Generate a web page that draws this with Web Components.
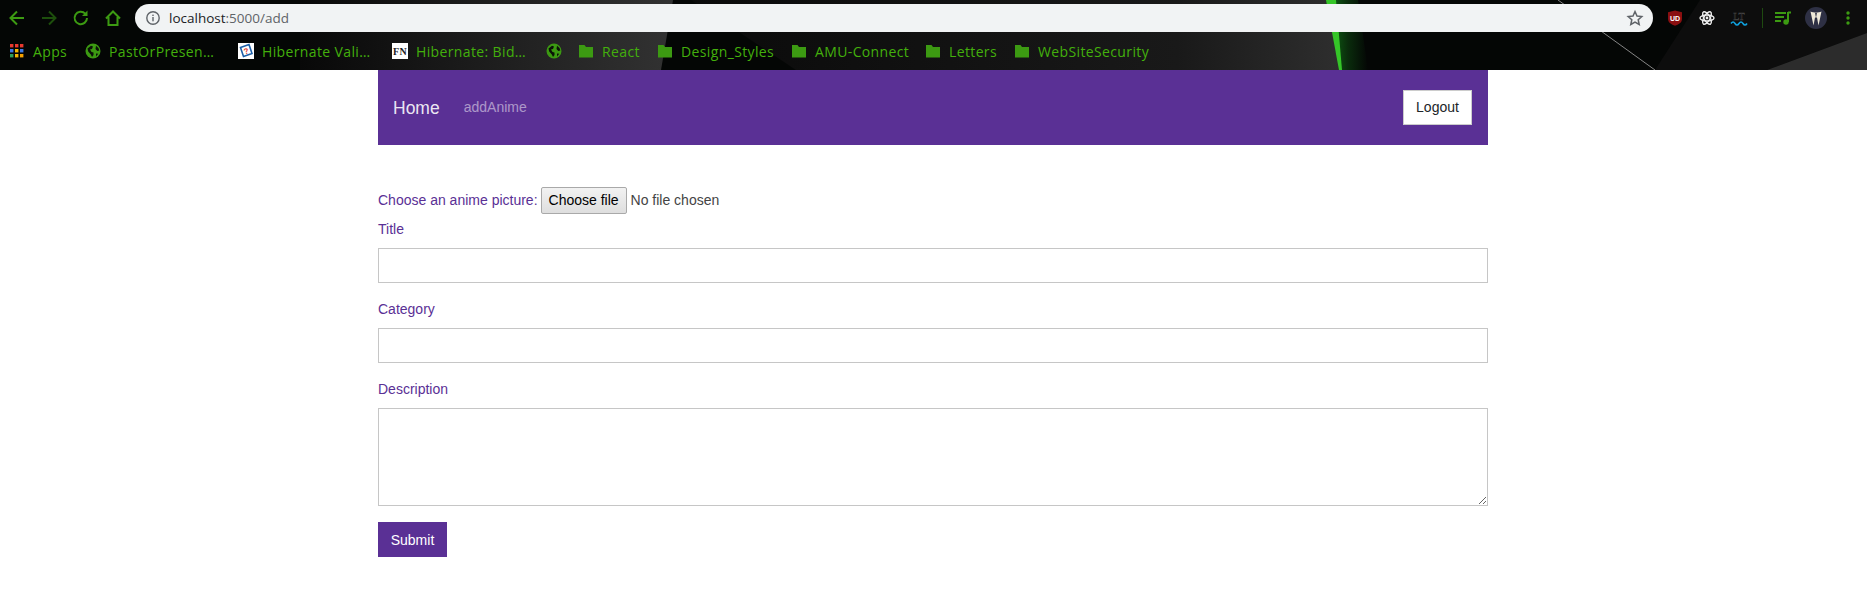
<!DOCTYPE html>
<html>
<head>
<meta charset="utf-8">
<title>localhost:5000/add</title>
<style>
  html, body { margin: 0; padding: 0; background: #fff; }
  body { font-family: "Liberation Sans", Arial, sans-serif; font-size: 14px; }
</style>
</head>
<body>
<browser-chrome url-host="localhost" url-path=":5000/add">
  <bookmark-item icon="apps" style="--w:76px">Apps</bookmark-item>
  <bookmark-item icon="globe" style="--w:153px">PastOrPresen…</bookmark-item>
  <bookmark-item icon="quiz" style="--w:154px">Hibernate Vali…</bookmark-item>
  <bookmark-item icon="fn" style="--w:154px">Hibernate: Bid…</bookmark-item>
  <bookmark-item icon="globe" style="--w:32px"></bookmark-item>
  <bookmark-item icon="folder" style="--w:79px">React</bookmark-item>
  <bookmark-item icon="folder" style="--w:134px">Design_Styles</bookmark-item>
  <bookmark-item icon="folder" style="--w:134px">AMU-Connect</bookmark-item>
  <bookmark-item icon="folder" style="--w:89px">Letters</bookmark-item>
  <bookmark-item icon="folder">WebSiteSecurity</bookmark-item>
</browser-chrome>
<app-page>
  <app-navbar slot="nav" brand="Home">
    <nav-link>addAnime</nav-link>
    <logout-button slot="end">Logout</logout-button>
  </app-navbar>
  <file-field label="Choose an anime picture:"></file-field>
  <form-field label="Title"></form-field>
  <form-field label="Category"></form-field>
  <form-field label="Description" multiline></form-field>
  <submit-button>Submit</submit-button>
</app-page>

<script>
const GREEN = '#3c9a12';

class BookmarkItem extends HTMLElement {
    static get icons() {
        return {
            apps: `<svg width="16" height="16" viewBox="0 0 16 16">
                <rect x="1" y="1" width="3.4" height="3.4" fill="#e8392f"/><rect x="6" y="1" width="3.4" height="3.4" fill="#e8392f"/><rect x="11" y="1" width="3.4" height="3.4" fill="#e8392f"/>
                <rect x="1" y="6" width="3.4" height="3.4" fill="#3b78e7"/><rect x="6" y="6" width="3.4" height="3.4" fill="#f4b400"/><rect x="11" y="6" width="3.4" height="3.4" fill="#3b78e7"/>
                <rect x="1" y="11" width="3.4" height="3.4" fill="#2f9e5b"/><rect x="6" y="11" width="3.4" height="3.4" fill="#f4b400"/><rect x="11" y="11" width="3.4" height="3.4" fill="#f4a000"/></svg>`,
            globe: `<svg width="16" height="16" viewBox="0 0 16 16"><circle cx="8" cy="8" r="7.5" fill="${GREEN}"/>
                <path d="M2.5 5.5L6 2.8 8 3.5 7 6 5 6.5 6.5 9 8.5 9.5V12L7 14 5.8 11.5 3.2 8.5zM11 2.8l2.5 2.2.8 2.5-2 .5L10.5 6zM11 10.5l2.3.3-2.3 2.7z" fill="#0b1208"/></svg>`,
            folder: `<svg width="16" height="16" viewBox="0 0 16 16"><path d="M1 2h5.5l1.5 2h7v10.5H1z" fill="${GREEN}"/></svg>`,
            quiz: `<svg width="16" height="16" viewBox="0 0 16 16"><rect width="16" height="16" fill="#fff"/>
                <path d="M2.5 4.5L11 1.500l3 9-8.500 3z" fill="#fff" stroke="#1c5fa8" stroke-width="1.6"/>
                <text x="8.3" y="11" font-family="Liberation Sans, sans-serif" font-size="8" font-weight="700" fill="#d8322a" text-anchor="middle" transform="rotate(-18 8 8)">?</text></svg>`,
            fn: `<svg width="16" height="16" viewBox="0 0 16 16"><rect width="16" height="16" fill="#fff"/>
                <text x="8" y="11.5" font-family="Liberation Serif, serif" font-size="10" font-weight="700" fill="#222" text-anchor="middle">FN</text></svg>`
        };
    }

    constructor() {
        super();
        this.attachShadow({ mode: 'open' });
    }

    connectedCallback() {
        const icon = BookmarkItem.icons[this.getAttribute('icon')] || '';
        this.shadowRoot.innerHTML = `
            <style>
                :host { display: inline-flex; flex: none; align-items: center; gap: 8px; width: var(--w, auto); height: 24px; color: #43b00c; font-size: 14px; white-space: nowrap; letter-spacing: 0.37px; }
                svg { display: block; flex: none; }
            </style>
            ${icon}<slot></slot>
        `;
    }
}

class BrowserChrome extends HTMLElement {
    constructor() {
        super();
        this.attachShadow({ mode: 'open' });
    }

    connectedCallback() {
        const host = this.getAttribute('url-host');
        const path = this.getAttribute('url-path');
        this.shadowRoot.innerHTML = `
            <style>
                :host { display: block; position: relative; height: 70px; background: #040605; overflow: hidden; font-family: "Open Sans", "Noto Sans", sans-serif; }
                .wallpaper { position: absolute; inset: 0; }
                .toolbar { position: relative; display: flex; align-items: center; height: 32px; box-sizing: border-box; padding: 4px 0 0 7px; }
                .nav { display: flex; align-items: center; gap: 12px; width: 128px; flex: none; }
                svg { display: block; flex: none; }
                .omnibox { width: 1518px; height: 28px; flex: none; background: #f1f3f4; border-radius: 14px; display: flex; align-items: center; padding: 0 9px 0 10px; box-sizing: border-box; font-size: 13.5px; color: #5f6368; }
                .omnibox b { font-weight: 400; color: #202124; }
                .omnibox .url { margin-left: 8px; flex: 1; }
                .actions { display: flex; align-items: center; margin-left: 6px; flex: none; }
                .slot { width: 32px; height: 28px; display: flex; align-items: center; justify-content: center; flex: none; }
                .sep { width: 1px; height: 20px; background: #1e4a10; margin: 0 4px 0 7px; flex: none; }
                .bookmarks { position: relative; display: flex; align-items: center; height: 24px; margin-top: 7px; padding-left: 9px; }
            </style>
            <svg class="wallpaper" width="1867" height="70" viewBox="0 0 1867 70">
                <defs>
                    <linearGradient id="fade" x1="0" x2="1" y1="0" y2="0"><stop offset="0" stop-color="#080808"/><stop offset="1" stop-color="#323232"/></linearGradient>
                    <linearGradient id="fade2" x1="0" x2="1" y1="0" y2="0"><stop offset="0" stop-color="#0a0a0a"/><stop offset=".75" stop-color="#191919"/><stop offset="1" stop-color="#2e2e2e"/></linearGradient>
                    <linearGradient id="glow" x1="0" x2="1" y1="0" y2="0"><stop offset="0" stop-color="#0f6a14"/><stop offset=".5" stop-color="#0a2c0c"/><stop offset="1" stop-color="#040605"/></linearGradient>
                </defs>
                <polygon points="300,0 673,0 661,70 300,70" fill="url(#fade)"/>
                <polygon points="691,0 1328,0 1340,70 796,70" fill="url(#fade2)"/>
                <polygon points="1328,0 1358,0 1368,70 1340,70" fill="url(#glow)"/>
                <polygon points="1326,0 1336,0 1342,70 1339,70" fill="#35c528"/>
                <polygon points="1700,0 1867,0 1867,33 1767,70 1655,70" fill="#0d0d0d"/>
                <polygon points="1767,70 1867,33 1867,70" fill="#2c2c2c"/>
                <line x1="1558" y1="0" x2="1655" y2="70" stroke="#858585" stroke-width="1"/>
            </svg>
            <div class="toolbar">
                <div class="nav">
                    <svg width="20" height="20" viewBox="0 0 20 20" fill="none" stroke="#3c9a12" stroke-width="2"><path d="M17 10H4M10 3.5L3.5 10l6.5 6.5"/></svg>
                    <svg width="20" height="20" viewBox="0 0 20 20" fill="none" stroke="#1d4f0c" stroke-width="2"><path d="M3 10h13M10 3.5l6.5 6.5-6.5 6.5"/></svg>
                    <svg width="20" height="20" viewBox="0 0 20 20" fill="none" stroke="#3c9a12" stroke-width="2"><path d="M16 10a6.2 6.2 0 1 1-1.8-4.4"/><path d="M16.5 2.5V8H11z" fill="#3c9a12" stroke="none"/></svg>
                    <svg width="20" height="20" viewBox="0 0 20 20" fill="none" stroke="#3c9a12" stroke-width="2"><path d="M3 10.5L10 3.5l7 7M5.5 9v8h9V9"/></svg>
                </div>
                <div class="omnibox">
                    <svg width="16" height="16" viewBox="0 0 16 16"><circle cx="8" cy="8" r="6.2" fill="none" stroke="#5f6368" stroke-width="1.4"/><rect x="7.3" y="7" width="1.4" height="4.3" fill="#5f6368"/><rect x="7.3" y="4.6" width="1.4" height="1.4" fill="#5f6368"/></svg>
                    <span class="url"><b>${host}</b>${path}</span>
                    <svg width="18" height="18" viewBox="0 0 18 18"><path d="M9 2.5l2 4.5 4.8.5-3.6 3.200 1 4.800L9 13l-4.200 2.500 1-4.800L2.200 7.500 7 7z" fill="none" stroke="#5f6368" stroke-width="1.5"/></svg>
                </div>
                <div class="actions">
                    <span class="slot"><svg width="16" height="16" viewBox="0 0 16 16"><path d="M8 .5l7 1.8v6.700c0 3.500-3.500 5.700-7 6.800-3.500-1.100-7-3.300-7-6.800V2.300z" fill="#8a0f10"/><text x="8" y="10.5" font-family="Liberation Sans, sans-serif" font-size="7" font-weight="700" fill="#fff" text-anchor="middle">UD</text></svg></span>
                    <span class="slot"><svg width="16" height="16" viewBox="0 0 16 16" fill="none" stroke="#eee" stroke-width="1.4"><ellipse cx="8" cy="8" rx="7" ry="3"/><ellipse cx="8" cy="8" rx="7" ry="3" transform="rotate(60 8 8)"/><ellipse cx="8" cy="8" rx="7" ry="3" transform="rotate(120 8 8)"/><circle cx="8" cy="8" r="1.4" fill="#eee" stroke="none"/></svg></span>
                    <span class="slot"><svg width="18" height="18" viewBox="0 0 18 18"><text x="9" y="10.5" font-family="Liberation Serif, serif" font-size="10" fill="#0b0b0b" stroke="#4a4a4a" stroke-width=".4" text-anchor="middle">LT</text><path d="M1 14.5c1.500-2 2.700-2 4 0s2.700 2 4 0 2.700-2 4 0 2.700 2 4 0" fill="none" stroke="#10a0dc" stroke-width="1.6"/></svg></span>
                    <span class="sep"></span>
                    <span class="slot"><svg width="16" height="14" viewBox="0 0 16 14"><path d="M0 2h11M0 6h9M0 10h6" stroke="#3c9a12" stroke-width="2"/><path d="M13 1v10M13 1.5h3" stroke="#3c9a12" stroke-width="2" fill="none"/><circle cx="11" cy="11" r="2.7" fill="#3c9a12"/></svg></span>
                    <span class="slot" style="margin-left:1px"><svg width="22" height="22" viewBox="0 0 22 22"><circle cx="11" cy="11" r="11" fill="#2e3044"/><path d="M5.5 4.5c3 1.300 8 1.300 11 0l-1.500 7-1.500 7-1.500-8h-2l-1.500 8-1.500-7z" fill="#efe9d8"/><path d="M10 5.8h2l-1 5z" fill="#2e3044"/></svg></span>
                    <span class="slot"><svg width="6" height="16" viewBox="0 0 6 16"><circle cx="3" cy="3" r="1.7" fill="#3c9a12"/><circle cx="3" cy="8" r="1.7" fill="#3c9a12"/><circle cx="3" cy="13" r="1.7" fill="#3c9a12"/></svg></span>
                </div>
            </div>
            <div class="bookmarks"><slot></slot></div>
        `;
    }
}

class AppPage extends HTMLElement {
    constructor() {
        super();
        this.attachShadow({ mode: 'open' }).innerHTML = `
            <style>
                :host { display: block; width: 1110px; margin: 0 0 0 378px; }
                .form { display: flex; flex-direction: column; align-items: stretch; padding-top: 42px; }
            </style>
            <slot name="nav"></slot>
            <div class="form"><slot></slot></div>
        `;
    }
}

class AppNavbar extends HTMLElement {
    constructor() {
        super();
        this.attachShadow({ mode: 'open' });
    }

    connectedCallback() {
        this.shadowRoot.innerHTML = `
            <style>
                :host { display: flex; align-items: center; height: 75px; background: #5a3095; padding: 0 16px 0 15px; box-sizing: border-box; }
                .brand { color: rgba(255,255,255,.9); font-size: 17.5px; margin: 2px 24px 0 0; }
                .end { margin-left: auto; }
            </style>
            <span class="brand">${this.getAttribute('brand')}</span>
            <slot></slot>
            <span class="end"><slot name="end"></slot></span>
        `;
    }
}

class NavLink extends HTMLElement {
    constructor() {
        super();
        this.attachShadow({ mode: 'open' }).innerHTML = `
            <style>:host { display: inline-block; color: rgba(255,255,255,.5); font-size: 14px; margin-bottom: 2px; }</style>
            <slot></slot>
        `;
    }
}

class LogoutButton extends HTMLElement {
    constructor() {
        super();
        this.attachShadow({ mode: 'open' }).innerHTML = `
            <style>
                :host { display: flex; align-items: center; justify-content: center; width: 69px; height: 35px; box-sizing: border-box; padding-bottom: 2px; background: #fff; border: 1px solid #ccc; color: #212529; font-size: 14px; }
            </style>
            <slot></slot>
        `;
    }
}

class FileField extends HTMLElement {
    constructor() {
        super();
        this.attachShadow({ mode: 'open' });
    }

    connectedCallback() {
        this.shadowRoot.innerHTML = `
            <style>
                :host { display: flex; align-items: center; height: 27px; color: #5a3095; font-size: 14px; white-space: nowrap; margin-bottom: 5px; }
                span { padding-bottom: 2px; }
                .pick { width: 86px; height: 27px; box-sizing: border-box; margin: 0 4px 0 3px; padding: 0 0 2px; border: 1px solid #a9a9a9; border-radius: 2px; background: linear-gradient(#f2f2f2, #dedede); color: #000; font: 14px "Liberation Sans", Arial, sans-serif; }
                .none { color: #444; }
            </style>
            <span>${this.getAttribute('label')}</span>
            <button class="pick" type="button">Choose file</button>
            <span class="none">No file chosen</span>
        `;
    }
}

class FormField extends HTMLElement {
    constructor() {
        super();
        this.attachShadow({ mode: 'open' });
    }

    connectedCallback() {
        const multiline = this.hasAttribute('multiline');
        this.shadowRoot.innerHTML = `
            <style>
                :host { display: block; margin-bottom: 16px; }
                label { display: block; color: #5a3095; font-size: 14px; line-height: 20px; margin-bottom: 9px; }
                input, textarea { display: block; width: 100%; box-sizing: border-box; margin: 0; border: 1px solid #c6c6c6; border-radius: 0; background: #fff; outline: none; font: 14px "Liberation Sans", Arial, sans-serif; }
                input { height: 35px; }
                textarea { height: 98px; }
            </style>
            <label>${this.getAttribute('label')}</label>
            ${multiline ? '<textarea></textarea>' : '<input type="text">'}
        `;
    }
}

class SubmitButton extends HTMLElement {
    constructor() {
        super();
        this.attachShadow({ mode: 'open' }).innerHTML = `
            <style>
                :host { display: flex; align-items: center; justify-content: center; align-self: flex-start; width: 69px; height: 35px; background: #5a3095; color: #fff; font-size: 14px; }
            </style>
            <slot></slot>
        `;
    }
}

customElements.define('bookmark-item', BookmarkItem);
customElements.define('browser-chrome', BrowserChrome);
customElements.define('app-page', AppPage);
customElements.define('app-navbar', AppNavbar);
customElements.define('nav-link', NavLink);
customElements.define('logout-button', LogoutButton);
customElements.define('file-field', FileField);
customElements.define('form-field', FormField);
customElements.define('submit-button', SubmitButton);
</script>
</body>
</html>
